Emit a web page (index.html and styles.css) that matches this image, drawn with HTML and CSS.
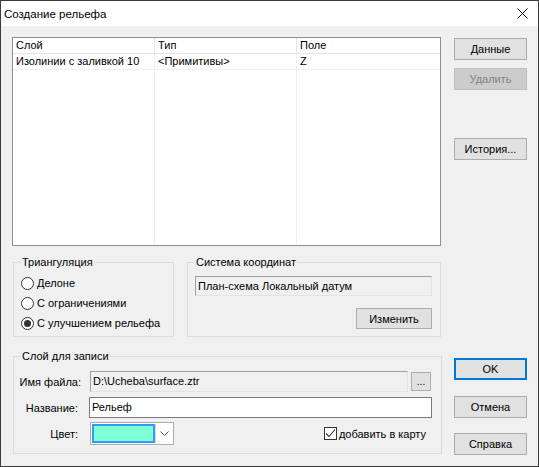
FILE: index.html
```html
<!DOCTYPE html>
<html lang="ru">
<head>
<meta charset="utf-8">
<title>Создание рельефа</title>
<link rel="stylesheet" href="styles.css">
</head>
<body>
<div class="window">
  <div class="titlebar">
    <span class="title">Создание рельефа</span>
    <svg class="close" width="11" height="11" viewBox="0 0 11 11"><path d="M0.5 0.5 L10.5 10.5 M10.5 0.5 L0.5 10.5" stroke="#000" stroke-width="1" fill="none"/></svg>
  </div>
  <div class="client">
    <div class="main">
      <div class="listview">
        <div class="col col1">
          <div class="hcell">Слой</div>
          <div class="cell">Изолинии с заливкой 10</div>
        </div>
        <div class="col col2">
          <div class="hcell">Тип</div>
          <div class="cell">&lt;Примитивы&gt;</div>
        </div>
        <div class="col col3">
          <div class="hcell">Поле</div>
          <div class="cell">Z</div>
        </div>
      </div>
      <div class="groups">
        <fieldset class="group tri">
          <legend>Триангуляция</legend>
          <div class="radios">
            <label class="radio"><span class="rbox"></span>Делоне</label>
            <label class="radio"><span class="rbox"></span>С ограничениями</label>
            <label class="radio"><span class="rbox checked"></span>С улучшением рельефа</label>
          </div>
        </fieldset>
        <fieldset class="group coord">
          <legend>Система координат</legend>
          <div class="coord-body">
            <div class="edit readonly coord-edit">План-схема Локальный датум</div>
            <button class="btn change">Изменить</button>
          </div>
        </fieldset>
      </div>
      <fieldset class="group output">
        <legend>Слой для записи</legend>
        <div class="form">
          <span class="flabel">Имя файла:</span>
          <div class="frow">
            <div class="edit readonly file-edit">D:\Ucheba\surface.ztr</div>
            <button class="btn browse">...</button>
          </div>
          <span class="flabel short">Название:</span>
          <div class="frow">
            <div class="edit name-edit">Рельеф</div>
          </div>
          <span class="flabel short">Цвет:</span>
          <div class="frow last">
            <div class="combo">
              <span class="swatch"></span>
              <span class="drop"><svg width="9" height="5" viewBox="0 0 9 5"><path d="M0.5 0.5 L4.5 4.5 L8.5 0.5" stroke="#555" fill="none"/></svg></span>
            </div>
            <label class="check"><span class="cbox"><svg width="11" height="11" viewBox="0 0 11 11"><path d="M1 5.5 L4 8.5 L10 1.5" stroke="#333" stroke-width="1.1" fill="none"/></svg></span>добавить в карту</label>
          </div>
        </div>
      </fieldset>
    </div>
    <div class="side">
      <button class="btn sbtn b-data">Данные</button>
      <button class="btn sbtn b-del" disabled>Удалить</button>
      <button class="btn sbtn b-hist">История...</button>
      <button class="btn sbtn b-ok">OK</button>
      <button class="btn sbtn b-cancel">Отмена</button>
      <button class="btn sbtn b-help">Справка</button>
    </div>
  </div>
</div>
</body>
</html>
```
FILE: styles.css
```css
html, body {
  margin: 0;
  padding: 0;
  background: #f0f0f0;
}
body {
  font-family: "Liberation Sans", Arial, sans-serif;
  font-size: 11px;
  color: #000;
}
.window {
  width: 539px;
  height: 467px;
  box-sizing: border-box;
  border: 1px solid #3c3c3c;
  background: #f0f0f0;
  display: flex;
  flex-direction: column;
}
.titlebar {
  height: 25px;
  flex: none;
  background: #fff;
  display: flex;
  align-items: center;
  justify-content: space-between;
  padding: 0 10px 0 3px;
}
.title {
  font-size: 11.5px;
}
.client {
  flex: 1;
  display: flex;
  padding: 11px 0 0 11px;
  gap: 12px;
}
.main {
  width: 430px;
  display: flex;
  flex-direction: column;
}
.listview {
  width: 429px;
  height: 209px;
  box-sizing: border-box;
  border: 1px solid #8f8f8f;
  background: #fff;
  display: flex;
}
.col {
  box-sizing: border-box;
  border-right: 1px solid #f0f0f0;
  display: flex;
  flex-direction: column;
}
.col1 { width: 142px; }
.col2 { width: 142px; }
.col3 { flex: 1; border-right: none; }
.hcell {
  height: 15px;
  line-height: 15px;
  border-bottom: 1px solid #e5e5e5;
  margin-right: -1px;
  border-right: 1px solid #e5e5e5;
  padding-left: 3px;
  white-space: nowrap;
}
.col3 .hcell { margin-right: 0; border-right: none; }
.cell {
  height: 15px;
  line-height: 15px;
  border-bottom: 1px solid #f0f0f0;
  padding-left: 3px;
  white-space: nowrap;
}
.groups {
  display: flex;
  margin-top: 10px;
  gap: 13px;
}
.group {
  margin: 0;
  padding: 0;
  border: 1px solid #dcdcdc;
  min-width: 0;
  box-sizing: border-box;
}
.group legend {
  margin-left: 7px;
  padding: 0 1px;
  line-height: 13px;
}
.tri {
  width: 161px;
  margin-left: 1px;
}
.radios {
  padding: 4px 0 2px 7px;
  display: flex;
  flex-direction: column;
}
.radio {
  height: 20px;
  display: flex;
  align-items: center;
  gap: 3px;
  white-space: nowrap;
}
.rbox {
  width: 13px;
  height: 13px;
  box-sizing: border-box;
  border: 1px solid #333;
  border-radius: 50%;
  background: #fff;
  display: flex;
  align-items: center;
  justify-content: center;
}
.rbox.checked::after {
  content: "";
  width: 7px;
  height: 7px;
  border-radius: 50%;
  background: #333;
}
.coord {
  width: 254px;
}
.coord-body {
  padding: 7px 8px 7px 7px;
  display: flex;
  flex-direction: column;
  align-items: flex-end;
}
.edit {
  box-sizing: border-box;
  height: 21px;
  line-height: 19px;
  padding-left: 2px;
  white-space: nowrap;
  overflow: hidden;
}
.readonly {
  background: #f0f0f0;
  border: 1px solid;
  border-color: #a0a0a0 #e3e3e3 #e3e3e3 #a0a0a0;
}
.coord-edit {
  width: 237px;
  height: 20px;
  line-height: 18px;
}
.btn {
  font: inherit;
  color: #000;
  background: #e1e1e1;
  border: 1px solid #adadad;
  margin: 0;
  padding: 0;
  box-sizing: border-box;
}
.btn:disabled {
  background: #cccccc;
  border-color: #bfbfbf;
  color: #838383;
}
.change {
  width: 76px;
  height: 21px;
  margin-top: 12px;
}
.output {
  width: 429px;
  margin-left: 1px;
  margin-top: 13px;
}
.form {
  display: grid;
  grid-template-columns: 67px 1fr;
  column-gap: 9px;
  row-gap: 5px;
  padding: 8px 8px 8px 0;
  align-items: center;
}
.flabel {
  text-align: right;
  white-space: nowrap;
}
.flabel.short {
  padding-right: 3px;
}
.frow {
  display: flex;
  align-items: center;
}
.frow.last {
  margin-top: -1px;
}
.file-edit {
  width: 318px;
}
.browse {
  width: 20px;
  height: 19px;
  margin-left: 3px;
  font-size: 10px;
  line-height: 12px;
}
.name-edit {
  width: 343px;
  margin-left: -1px;
  background: #fff;
  border: 1px solid #7a7a7a;
}
.combo {
  width: 84px;
  height: 23px;
  box-sizing: border-box;
  border: 1px solid #adadad;
  background: #fff;
  display: flex;
  padding: 1px;
}
.swatch {
  flex: 1;
  box-sizing: border-box;
  border: 2px solid #3399ff;
  background: #7fffd4;
}
.drop {
  width: 16px;
  border-left: 1px solid #dadada;
  display: flex;
  align-items: center;
  justify-content: center;
}
.check {
  margin-left: auto;
  margin-right: 7px;
  display: flex;
  align-items: center;
  gap: 2px;
  white-space: nowrap;
}
.cbox {
  width: 13px;
  height: 13px;
  box-sizing: border-box;
  border: 1px solid #333;
  background: #fff;
  display: flex;
  align-items: center;
  justify-content: center;
}
.side {
  width: 73px;
  display: flex;
  flex-direction: column;
}
.sbtn {
  width: 73px;
  height: 22px;
}
.b-data { margin-top: 1px; }
.b-del { margin-top: 8px; }
.b-hist { margin-top: 48px; }
.b-ok {
  margin-top: 198px;
  border: 2px solid #0078d7;
}
.b-cancel { margin-top: 16px; }
.b-help { margin-top: 15px; }
```
